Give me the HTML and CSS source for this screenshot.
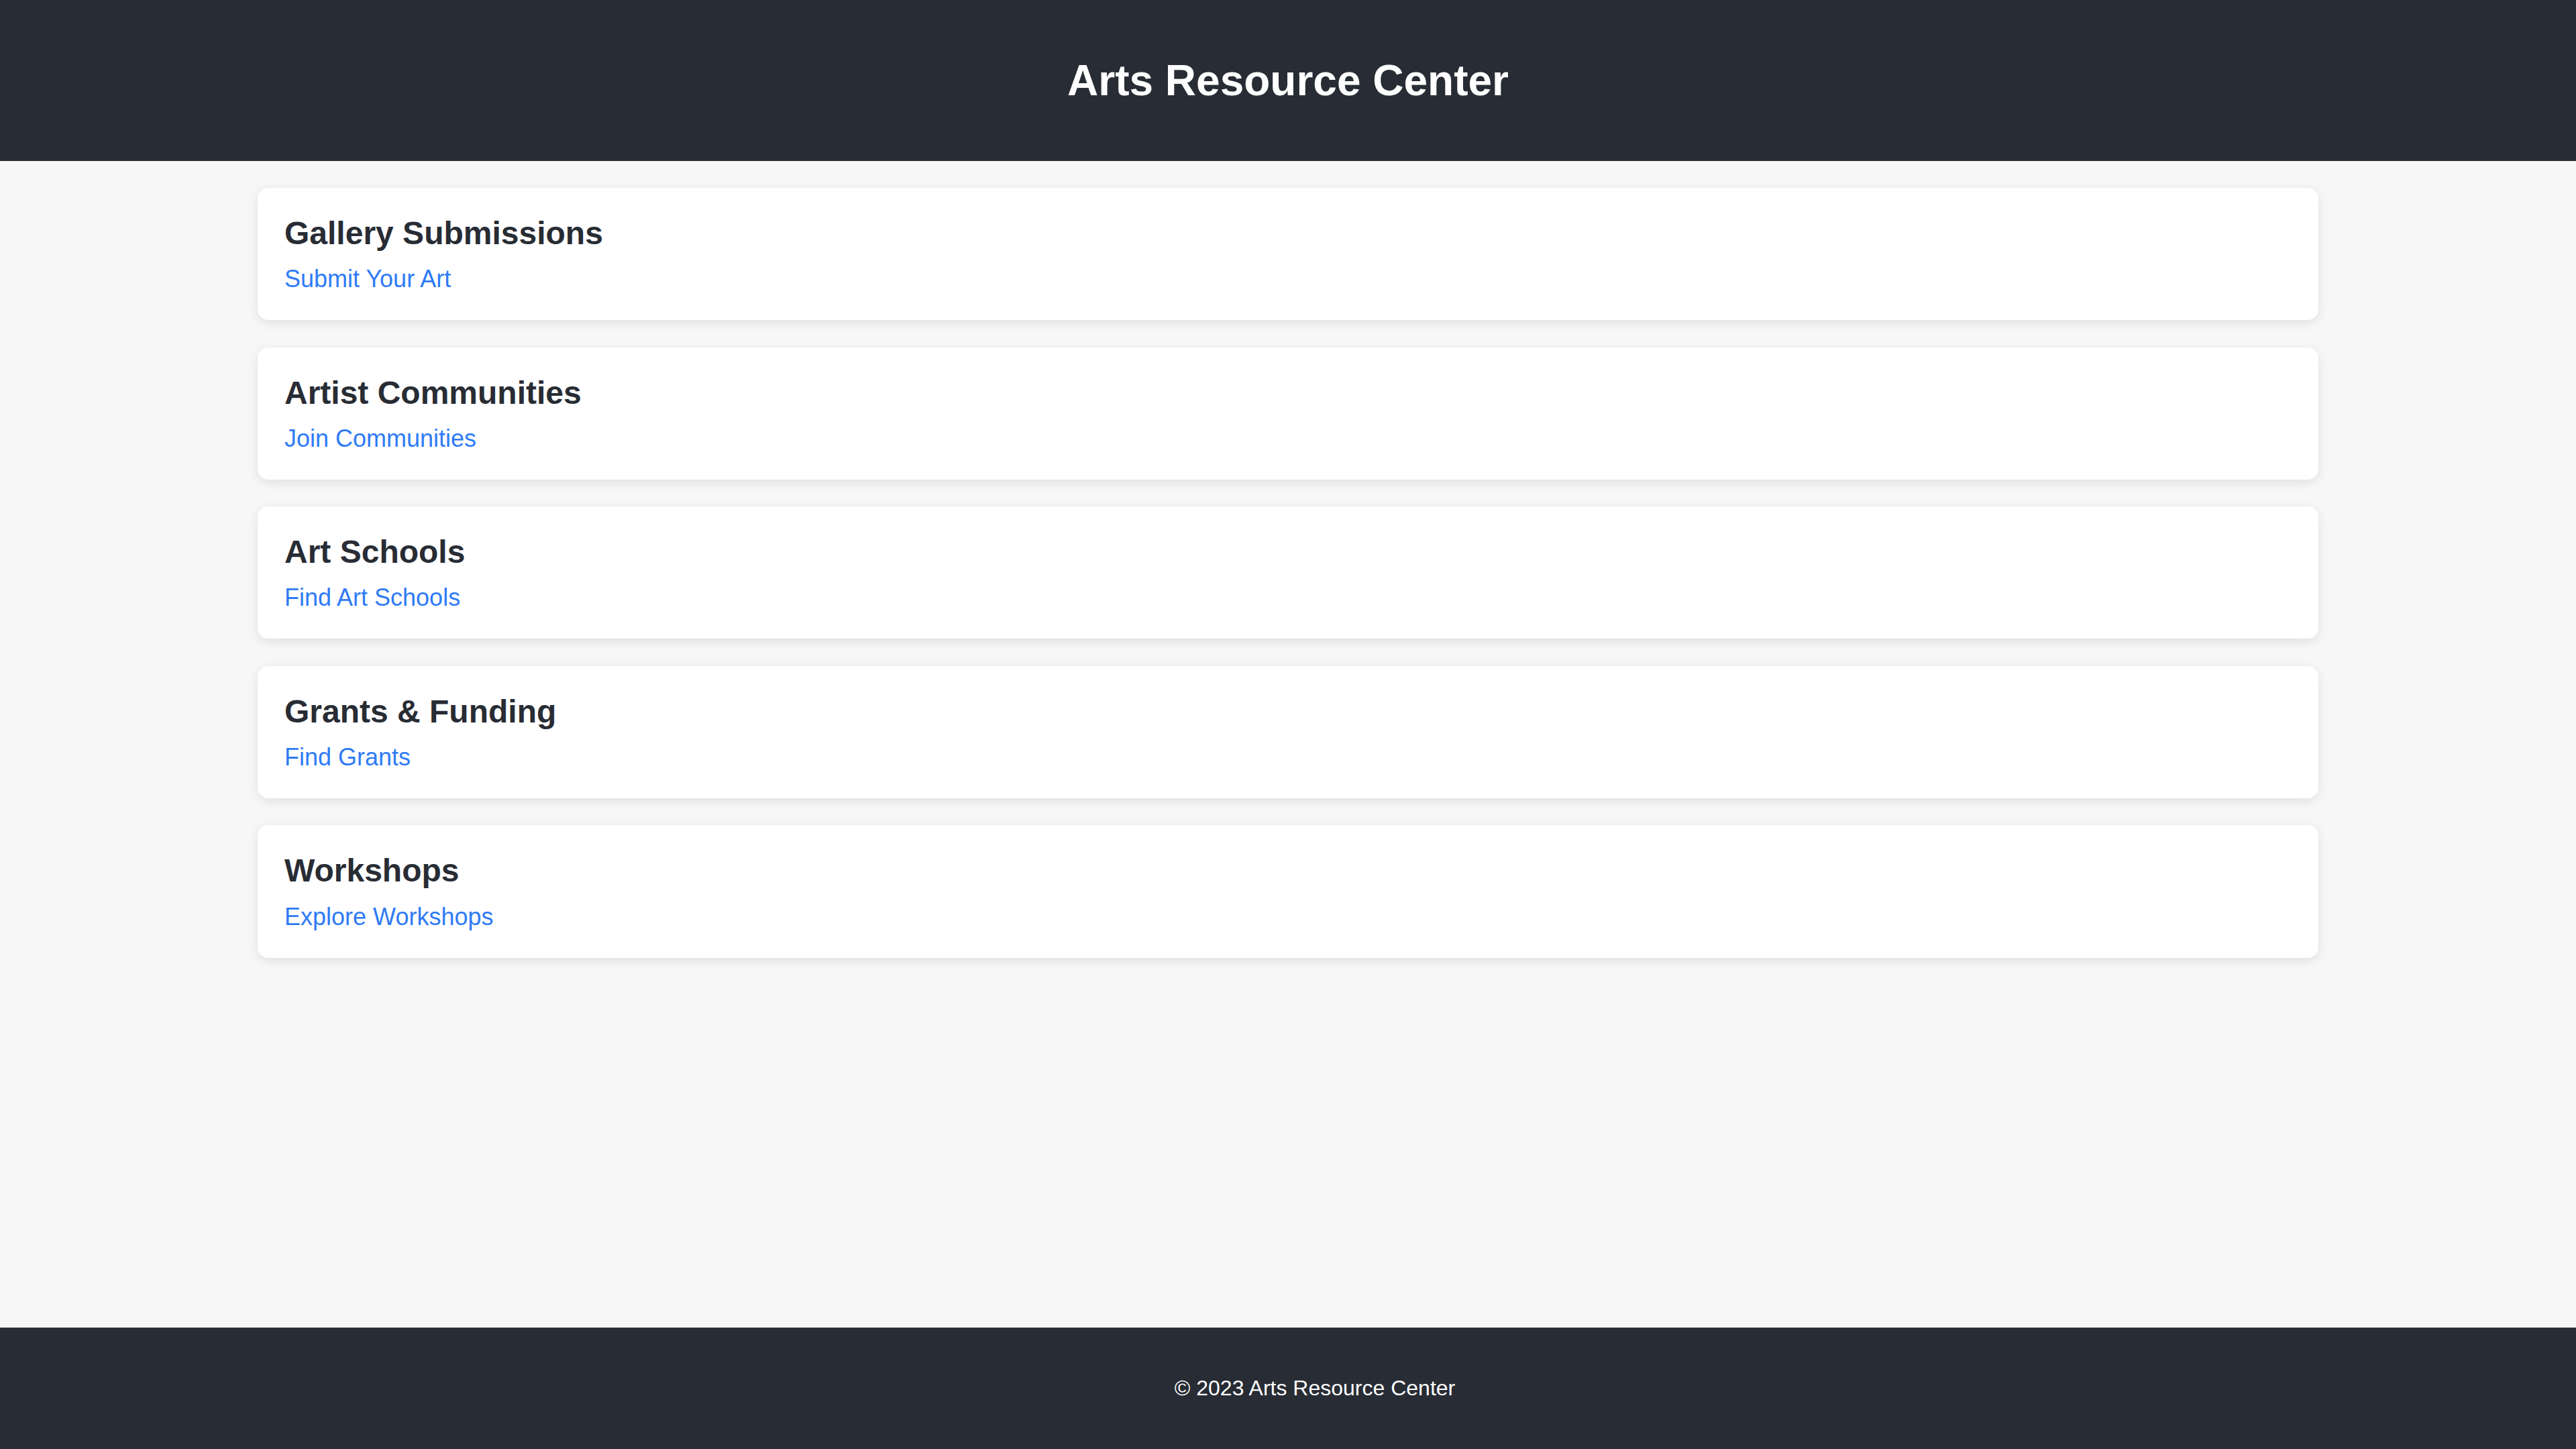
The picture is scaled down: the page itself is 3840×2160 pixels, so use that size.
FILE: index.html
```html
<!DOCTYPE html>
<html lang="en">
<head>
<meta charset="utf-8">
<title>Arts Resource Center</title>
<link rel="stylesheet" href="styles.css">
</head>
<body>
<header class="site-header">
  <h1 class="site-title">Arts Resource Center</h1>
</header>
<main class="content">
  <section class="card">
    <h2 class="card-title">Gallery Submissions</h2>
    <a class="card-link" href="#">Submit Your Art</a>
  </section>
  <section class="card">
    <h2 class="card-title">Artist Communities</h2>
    <a class="card-link" href="#">Join Communities</a>
  </section>
  <section class="card">
    <h2 class="card-title">Art Schools</h2>
    <a class="card-link" href="#">Find Art Schools</a>
  </section>
  <section class="card">
    <h2 class="card-title">Grants &amp; Funding</h2>
    <a class="card-link" href="#">Find Grants</a>
  </section>
  <section class="card">
    <h2 class="card-title">Workshops</h2>
    <a class="card-link" href="#">Explore Workshops</a>
  </section>
</main>
<footer class="site-footer">
  <p class="footer-text">© 2023 Arts Resource Center</p>
</footer>
</body>
</html>
```

FILE: styles.css
```css
* { box-sizing: border-box; }

html, body {
  margin: 0;
  padding: 0;
}

body {
  font-family: "Liberation Sans", Arial, sans-serif;
  background: #f7f7f7;
  color: #282c34;
  min-height: 100vh;
  display: flex;
  flex-direction: column;
}

.site-header {
  background: #282c34;
  color: #ffffff;
  padding: 40px;
  text-align: center;
}

.site-title {
  margin: 43px 0;
  font-size: 64px;
  font-weight: 700;
  line-height: normal;
}

.content {
  flex: 1;
  display: flex;
  flex-direction: column;
  align-items: center;
  gap: 40.4px;
  padding: 40px 0;
}

.card {
  width: 3072px;
  background: #ffffff;
  border-radius: 16px;
  padding: 40px;
  box-shadow: 0 4px 16px rgba(0, 0, 0, 0.1);
  display: flex;
  flex-direction: column;
  align-items: flex-start;
}

.card-title {
  margin: 0 0 20.2px;
  font-size: 48px;
  font-weight: 700;
  line-height: normal;
  color: #282c34;
}

.card-link {
  font-size: 36px;
  line-height: normal;
  color: #2f7bf6;
  text-decoration: none;
}

.site-footer {
  background: #282c34;
  color: #ffffff;
  text-align: center;
  padding: 40px 0 40px 80px;
}

.footer-text {
  margin: 32px 0;
  font-size: 32px;
  line-height: normal;
}
```
